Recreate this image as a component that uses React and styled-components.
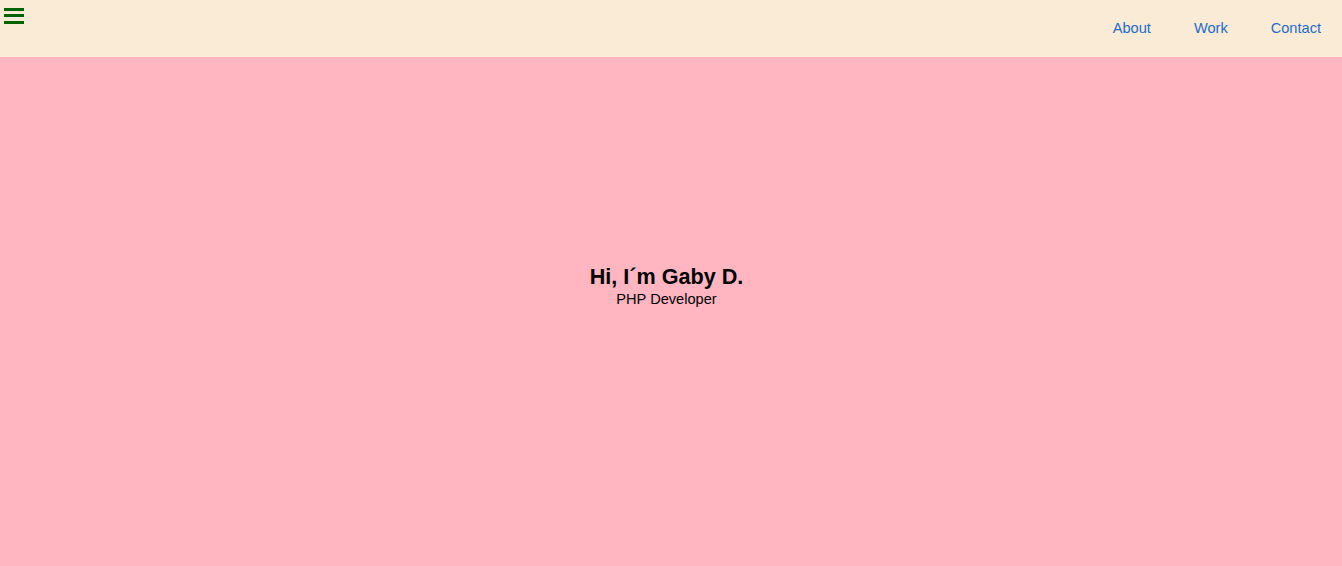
import React from 'react'
import styled, { createGlobalStyle } from 'styled-components'

const GlobalStyle = createGlobalStyle`
    html, body {
        margin: 0;
        padding: 0;
        background: #ffffff;
    }
    body {
        font-family: "Liberation Sans", Arial, sans-serif;
    }
`

const Page = styled.div`
    display: flex;
    flex-direction: column;
    min-height: 100vh;
`

const Header = styled.header`
    height: 57px;
    background: #faebd7;
    display: flex;
    justify-content: space-between;
    align-items: flex-start;
`

const MenuButton = styled.button`
    border: none;
    background: none;
    padding: 0;
    margin: 8px 0 0 4px;
    display: flex;
    cursor: pointer;
`

const Nav = styled.nav`
    display: flex;
    gap: 43px;
    padding: 20px 21px 0 0;
`

const NavLink = styled.a`
    color: #1e6bc8;
    font-size: 14.6px;
    text-decoration: none;
    line-height: 16px;
`

const Hero = styled.main`
    flex: 1;
    background: #ffb6c1;
    display: flex;
    flex-direction: column;
    align-items: center;
    padding: 207px 9px 0 0;
`

const Title = styled.h1`
    margin: 0;
    font-size: 21.6px;
    font-weight: bold;
    color: #000;
`

const Subtitle = styled.p`
    margin: 1px 0 0;
    font-size: 14.6px;
    color: #000;
`

function Bars() {
    return (
        <svg width="20" height="16" viewBox="0 0 20 16">
            <rect x="0" y="0" width="20" height="3" fill="#006400" />
            <rect x="0" y="6" width="20" height="3" fill="#006400" />
            <rect x="0" y="13" width="20" height="3" fill="#006400" />
        </svg>
    )
}

export default function App() {
    return (
        <Page>
            <GlobalStyle />
            <Header>
                <MenuButton aria-label="menu"><Bars /></MenuButton>
                <Nav>
                    <NavLink href="#about">About</NavLink>
                    <NavLink href="#work">Work</NavLink>
                    <NavLink href="#contact">Contact</NavLink>
                </Nav>
            </Header>
            <Hero>
                <Title>Hi, I´m Gaby D.</Title>
                <Subtitle>PHP Developer</Subtitle>
            </Hero>
        </Page>
    )
}
